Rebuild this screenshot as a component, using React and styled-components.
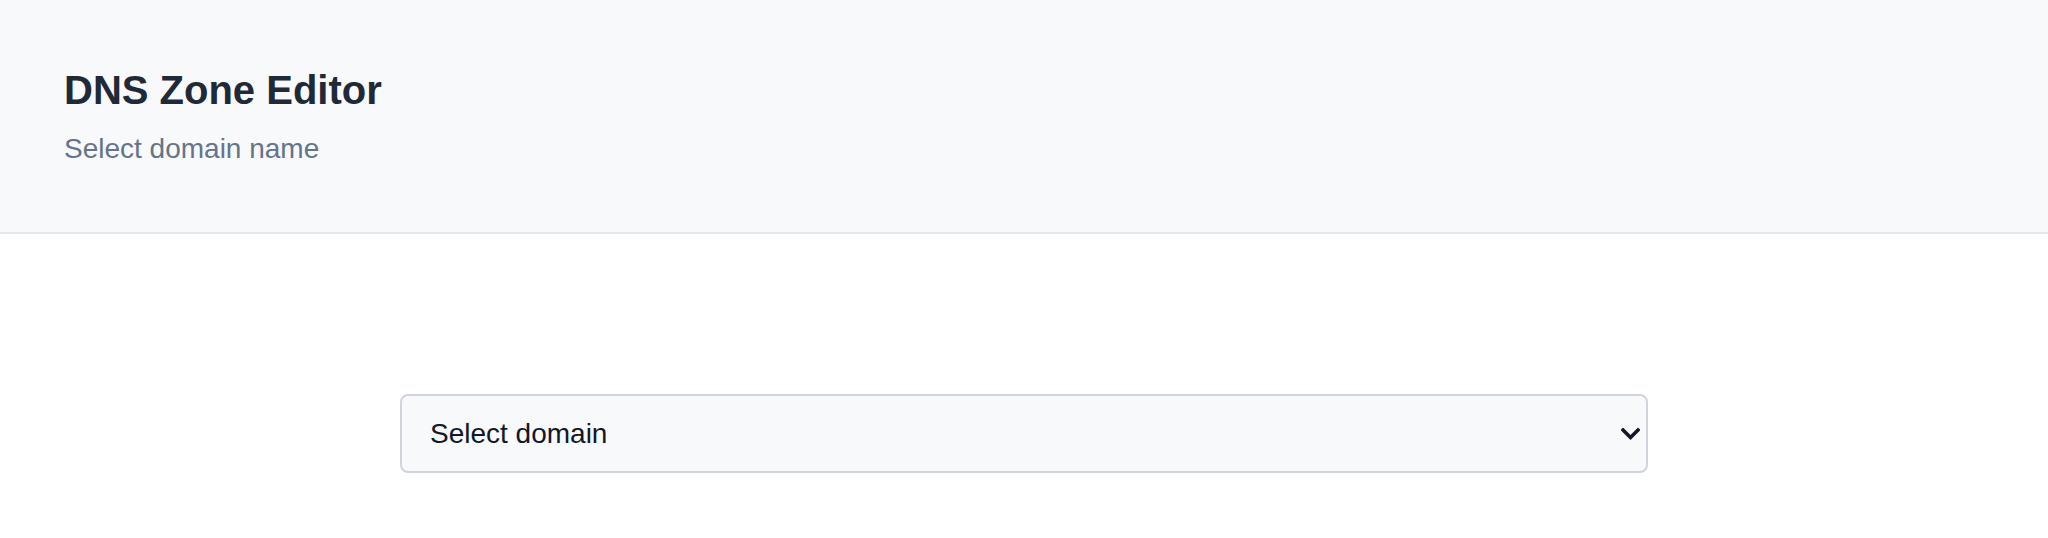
import React from "react";
import styled, { createGlobalStyle } from "styled-components";

const GlobalStyle = createGlobalStyle`
  html, body {
    margin: 0;
    padding: 0;
    background: #ffffff;
    font-family: "Liberation Sans", Arial, sans-serif;
  }
`;

export const Page = styled.div`
  width: 100%;
  min-height: 538px;
  display: flex;
  flex-direction: column;
  background: #ffffff;
`;

export const Header = styled.header`
  background-color: #f8f9fb;
  border-bottom: 2px solid #e3e5e9;
  padding: 66px 64px 65px;
  display: flex;
  flex-direction: column;
  gap: 17px;
`;

export const Title = styled.h1`
  margin: 0;
  font-size: 40px;
  line-height: 48px;
  font-weight: bold;
  color: #1f2937;
`;

export const Subtitle = styled.p`
  margin: 0;
  font-size: 28px;
  line-height: 36px;
  color: #64748b;
`;

export const Content = styled.main`
  display: flex;
  justify-content: center;
  padding: 160px 0 65px;
`;

export const SelectWrap = styled.div`
  position: relative;
  width: 1248px;
`;

export const DomainSelect = styled.select`
  appearance: none;
  -webkit-appearance: none;
  width: 100%;
  height: 79px;
  box-sizing: border-box;
  padding: 0 60px 0 28px;
  border: 2px solid #d1d5db;
  border-radius: 8px;
  background-color: #f8f9fb;
  font-family: "Liberation Sans", Arial, sans-serif;
  font-size: 28px;
  color: #111827;
  outline: none;
`;

export const Chevron = styled.svg`
  position: absolute;
  right: 8px;
  top: 50%;
  width: 19px;
  height: 13px;
  transform: translateY(-50%);
  pointer-events: none;
`;

const App = () => {
  return (
    <Page>
      <GlobalStyle />
      <Header>
        <Title>DNS Zone Editor</Title>
        <Subtitle>Select domain name</Subtitle>
      </Header>
      <Content>
        <SelectWrap>
          <DomainSelect defaultValue="">
            <option value="">Select domain</option>
          </DomainSelect>
          <Chevron viewBox="0 0 19 13" fill="none">
            <path
              d="M2 2.5 L9.5 10 L17 2.5"
              stroke="#111827"
              strokeWidth="3.6"
              strokeLinecap="square"
              strokeLinejoin="miter"
            />
          </Chevron>
        </SelectWrap>
      </Content>
    </Page>
  );
};

export default App;
